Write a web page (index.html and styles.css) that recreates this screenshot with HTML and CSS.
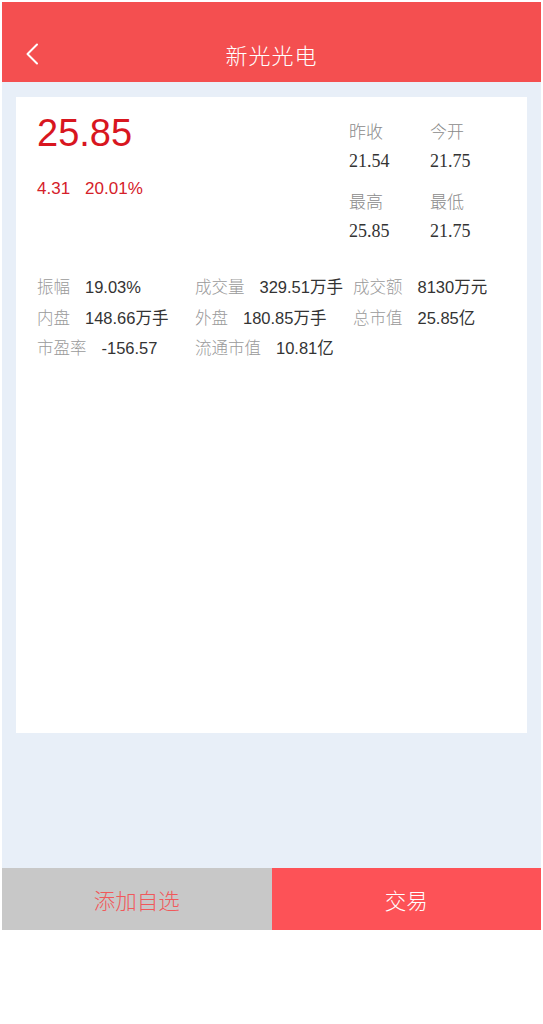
FILE: index.html
```html
<!DOCTYPE html>
<html lang="zh-CN">
<head>
<meta charset="utf-8">
<title>新光光电</title>
<link rel="stylesheet" href="styles.css">
</head>
<body>
<div class="app">
  <header class="header">
    <div class="back">
      <svg width="14" height="22" viewBox="0 0 14 22"><path d="M12 1.5 L2.5 11 L12 20.5" fill="none" stroke="#fff" stroke-width="2" stroke-linecap="round" stroke-linejoin="round"/></svg>
    </div>
    <div class="title">新光光电</div>
    <div class="spacer"></div>
  </header>
  <main class="main">
    <section class="card">
      <div class="top">
        <div class="price-col">
          <div class="price">25.85</div>
          <div class="change"><span>4.31</span><span>20.01%</span></div>
        </div>
        <div class="quote">
          <div class="q-label">昨收</div>
          <div class="q-label">今开</div>
          <div class="q-val">21.54</div>
          <div class="q-val">21.75</div>
          <div class="q-label gap">最高</div>
          <div class="q-label gap">最低</div>
          <div class="q-val">25.85</div>
          <div class="q-val">21.75</div>
        </div>
      </div>
      <div class="stats">
        <div class="cell"><span class="s-label">振幅</span><span class="s-val">19.03%</span></div>
        <div class="cell"><span class="s-label">成交量</span><span class="s-val">329.51万手</span></div>
        <div class="cell"><span class="s-label">成交额</span><span class="s-val">8130万元</span></div>
        <div class="cell"><span class="s-label">内盘</span><span class="s-val">148.66万手</span></div>
        <div class="cell"><span class="s-label">外盘</span><span class="s-val">180.85万手</span></div>
        <div class="cell"><span class="s-label">总市值</span><span class="s-val">25.85亿</span></div>
        <div class="cell"><span class="s-label">市盈率</span><span class="s-val">-156.57</span></div>
        <div class="cell"><span class="s-label">流通市值</span><span class="s-val">10.81亿</span></div>
      </div>
    </section>
  </main>
  <footer class="actions">
    <div class="btn btn-add">添加自选</div>
    <div class="btn btn-trade">交易</div>
  </footer>
</div>
</body>
</html>
```
FILE: styles.css
```css
* { box-sizing: border-box; }
html, body { margin: 0; padding: 0; background: #ffffff; }
body {
  font-family: "Liberation Sans", "Noto Sans CJK SC", sans-serif;
}
.app {
  margin: 2px 2px 0;
  height: 928px;
  display: flex;
  flex-direction: column;
}
.header {
  height: 80px;
  background: #f44f50;
  padding-top: 24px;
  display: grid;
  grid-template-columns: 1fr auto 1fr;
  align-items: center;
}
.back {
  height: 56px;
  padding-left: 23px;
  display: flex;
  align-items: center;
}
.back svg { display: block; }
.title {
  color: #ffffff;
  font-family: "Noto Sans CJK SC", sans-serif;
  font-weight: 300;
  font-size: 22px;
  line-height: 56px;
  letter-spacing: 1px;
}
.main {
  flex: 1;
  background: #e8eff8;
  padding: 15px 14px 0;
}
.card {
  background: #ffffff;
  height: 636px;
  padding: 17px 21px;
}
.top {
  display: flex;
}
.price-col {
  flex: 0 0 312px;
}
.price {
  color: #d8161f;
  font-size: 38px;
  line-height: 38px;
}
.change {
  color: #d52029;
  font-size: 17px;
  line-height: 24px;
  margin-top: 25px;
  display: flex;
  gap: 15px;
}
.quote {
  margin-top: 2px;
  display: grid;
  grid-template-columns: 81px 81px;
}
.q-label {
  font-family: "Noto Sans CJK SC", sans-serif;
  font-weight: 300;
  color: #8a8a8a;
  font-size: 17px;
  line-height: 30px;
}
.q-label.gap { margin-top: 10px; }
.q-val {
  font-family: "Liberation Serif", serif;
  color: #333333;
  font-size: 18px;
  line-height: 30px;
}
.stats {
  margin-top: 26px;
  display: grid;
  grid-template-columns: 158px 158px 158px;
}
.cell {
  font-size: 16.5px;
  line-height: 29.5px;
  white-space: nowrap;
}
.s-label {
  font-family: "Noto Sans CJK SC", sans-serif;
  font-weight: 300;
  color: #9a9a9a;
  margin-right: 15px;
}
.s-val {
  color: #333333;
}
.actions {
  height: 62px;
  display: flex;
}
.btn {
  flex: 1;
  display: flex;
  align-items: center;
  justify-content: center;
  font-family: "Noto Sans CJK SC", sans-serif;
  font-weight: 300;
  font-size: 21.5px;
}
.btn-add {
  background: #c8c8c8;
  color: #f0595b;
}
.btn-trade {
  background: #fd5257;
  color: #ffffff;
}
```
